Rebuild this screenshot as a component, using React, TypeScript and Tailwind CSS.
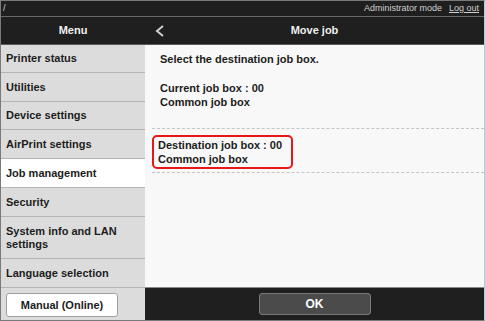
import React from "react";

const font = { fontFamily: '"Liberation Sans", Arial, sans-serif' };

function MenuItem({ label, h, active }: { label: React.ReactNode; h: string; active?: boolean }) {
  return (
    <div
      className={`${h} flex items-center px-[5px] border-b border-[#b4b4b4] text-[11px] font-bold leading-[13px] text-[#1c1c1c] ${
        active ? "bg-white" : "bg-[#dcdcdc]"
      }`}
    >
      {label}
    </div>
  );
}

export default function App() {
  return (
    <div
      style={font}
      className="w-[485px] h-[321px] flex flex-col border-t border-l border-b border-[#7a7a7a] border-r border-r-[#b9c9d9] overflow-hidden"
    >
      {/* top bar */}
      <div className="h-[16px] shrink-0 bg-[#1f1f1f] border-b border-[#6a6a6a] flex items-center justify-between px-[2px] text-[9px] text-[#d0d0d0]">
        <span>/</span>
        <div className="flex items-center gap-[7px] pr-[3px]">
          <span>Administrator mode</span>
          <span className="underline">Log out</span>
        </div>
      </div>
      {/* header */}
      <div className="h-[28px] shrink-0 bg-[#1f1f1f] border-b border-[#5a5a5a] flex text-[11px] font-bold text-[#f0f0f0]">
        <div className="w-[144px] flex items-center justify-center">Menu</div>
        <div className="flex-1 relative flex items-center justify-center">
          <svg className="absolute left-[10px] top-[8px]" width="10" height="12" viewBox="0 0 10 12">
            <polyline points="8,1 2,6 8,11" fill="none" stroke="#d0d0d0" strokeWidth="2" />
          </svg>
          <span>Move job</span>
        </div>
      </div>
      {/* main */}
      <div className="flex-1 flex min-h-0">
        <div className="w-[144px] flex flex-col bg-[#dcdcdc]">
          <MenuItem h="h-[28px]" label="Printer status" />
          <MenuItem h="h-[29px]" label="Utilities" />
          <MenuItem h="h-[28px]" label="Device settings" />
          <MenuItem h="h-[29px]" label="AirPrint settings" />
          <MenuItem h="h-[29px]" label="Job management" active />
          <MenuItem h="h-[29px]" label="Security" />
          <MenuItem
            h="h-[42px]"
            label={
              <span>
                System info and LAN
                <br />
                settings
              </span>
            }
          />
          <MenuItem h="h-[29px]" label="Language selection" />
          <div className="flex-1 flex items-start pt-[5px] pl-[5px]">
            <div className="w-[112px] h-[24px] bg-white border border-[#a0a0a0] rounded-[3px] flex items-center justify-center text-[11px] font-bold text-[#1c1c1c]">
              Manual (Online)
            </div>
          </div>
        </div>
        <div className="flex-1 flex flex-col">
          <div className="flex-1 bg-[#f8f8f8] border-b border-[#8a8a8a] text-[11px] font-bold leading-[14px] text-[#1c1c1c]">
            <div className="px-[15px] pt-[7px]">
              <div>Select the destination job box.</div>
              <div className="mt-[15px]">Current job box : 00</div>
              <div>Common job box</div>
            </div>
            <div className="ml-[7px] mt-[19px] border-t border-dashed border-[#c4c4c4] pt-[6px] pb-[3px] border-b">
              <div className="w-[141px] h-[34px] border-2 border-[#e8161b] rounded-[5px] pl-[4px] flex flex-col justify-center">
                <div>Destination job box : 00</div>
                <div>Common job box</div>
              </div>
            </div>
          </div>
          <div className="h-[32px] shrink-0 bg-[#1f1f1f] flex justify-center pt-[5px]">
            <div className="w-[112px] h-[22px] bg-[#4b4b4b] border border-[#7a7a7a] rounded-[3px] flex items-center justify-center text-[12px] font-bold text-white">
              OK
            </div>
          </div>
        </div>
      </div>
    </div>
  );
}
